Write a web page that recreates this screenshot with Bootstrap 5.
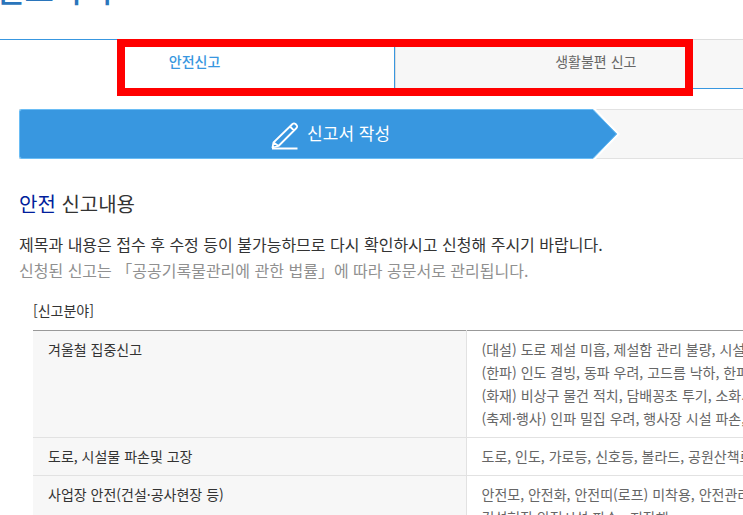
<!DOCTYPE html>
<html lang="ko">
<head>
<meta charset="utf-8">
<meta name="viewport" content="width=device-width, initial-scale=1">
<title>신고하기</title>
<link href="https://cdn.jsdelivr.net/npm/bootstrap@5.3.0/dist/css/bootstrap.min.css" rel="stylesheet">
<style>
body { font-family: "Noto Sans CJK KR", "Noto Sans KR", sans-serif; font-size: 14px; line-height: 23px; color: #333; height: 100vh; }
.page-title { font-size: 32px; line-height: 46px; font-weight: 500; color: #2a75bb; margin: -35px 0 28px -5px; }
.report-tabs { width: 108%; margin-left: -6px; }
.report-tabs a { height: 50px; padding-top: 10px; border: 1px solid #ddd; border-bottom-color: #3897e0; background: #f7f7f7; color: #666; }
.report-tabs a.active { border-color: #3897e0; border-bottom-color: #fff; background: #fff; color: #3897e0; font-weight: 500; }
.highlight { left: 117px; right: 50px; top: 0; height: 57px; border: 8px solid #f00; pointer-events: none; }
.steps { margin: 20px 0 0 19px; background: #f7f7f7; box-shadow: inset 0 1px #e2e2e2, inset 0 -1px #e2e2e2; }
.step-now { height: 50px; width: calc(80% - 5px); background: #3897e0; border: 1px solid #6abdf5; border-right: 0; border-radius: 3px 0 0 3px; color: #fff; font-size: 17px; padding: 0 0 3px 48px; }
.step-now svg { margin-top: 6px; }
.content-area { padding-left: 19px; }
.section-title { font-size: 20px; line-height: 30px; font-weight: 400; margin: 30px 0 12px; }
.section-title span { color: #001e9c; }
.notice { font-size: 16px; line-height: 26px; }
.notice-sub { color: #909090; }
.field-area { padding-left: 14px; margin-top: 16px; }
.field-table { width: 1000px; table-layout: fixed; border-top: 1px solid #999; }
.field-table th, .field-table td { padding: 7px 15px; border-bottom: 1px solid #e2e2e2; vertical-align: top; font-weight: 400; white-space: nowrap; }
.field-table th { width: 433px; background: #f7f7f7; border-right: 1px solid #e2e2e2; }
.field-table td { color: #666; }
</style>
<script src="https://cdn.jsdelivr.net/npm/bootstrap@5.3.0/dist/js/bootstrap.bundle.min.js"></script>
</head>
<body class="overflow-hidden">
<h1 class="page-title">신고하기</h1>
<div class="position-relative">
  <nav class="report-tabs d-flex" aria-label="신고 종류">
    <a class="active w-50 text-center text-decoration-none" href="#" aria-current="page">안전신고</a>
    <a class="w-50 text-center text-decoration-none" href="#">생활불편 신고</a>
  </nav>
  <div class="highlight position-absolute"></div>
</div>
<div class="steps d-flex">
  <div class="step-now d-flex align-items-center justify-content-center gap-2">
    <svg width="28" height="28" viewBox="0 0 28 28" fill="none" stroke="#fff" stroke-width="1.800" stroke-linejoin="round" aria-hidden="true"><path d="M1.500 25.500L2.500 20.500 21.500 2q1.500-1.300 3 0l1 1q1.300 1.500 0 3L7.500 24zM19 4.500l4.500 4.500M2.500 20.500l5 3.500"/><path d="M1 26.500h25.500" stroke-width="2"/></svg>
    <span>신고서 작성</span>
  </div>
  <svg width="27" height="50" viewBox="0 0 27 50" aria-hidden="true"><path d="M0 0h3l24 25L3 50H0z" fill="#fff"/><path d="M0 .5L24 25 0 49.5z" fill="#3897e0"/><path d="M0 .5L23.500 25 0 49.500" fill="none" stroke="#6abdf5"/></svg>
</div>
<main class="content-area">
  <h2 class="section-title"><span>안전</span> 신고내용</h2>
  <p class="notice mb-0 text-nowrap">제목과 내용은 접수 후 수정 등이 불가능하므로 다시 확인하시고 신청해 주시기 바랍니다.</p>
  <p class="notice notice-sub mb-0 text-nowrap">신청된 신고는 「공공기록물관리에 관한 법률」에 따라 공문서로 관리됩니다.</p>
  <div class="field-area">
    <div class="mb-2">[신고분야]</div>
    <table class="field-table">
      <tbody>
        <tr><th scope="row">겨울철 집중신고</th><td>(대설) 도로 제설 미흡, 제설함 관리 불량, 시설물 파손<br>(한파) 인도 결빙, 동파 우려, 고드름 낙하, 한파 쉼터<br>(화재) 비상구 물건 적치, 담배꽁초 투기, 소화시설<br>(축제·행사) 인파 밀집 우려, 행사장 시설 파손, 안전</td></tr>
        <tr><th scope="row">도로, 시설물 파손및 고장</th><td>도로, 인도, 가로등, 신호등, 볼라드, 공원산책로</td></tr>
        <tr><th scope="row">사업장 안전(건설·공사현장 등)</th><td>안전모, 안전화, 안전띠(로프) 미착용, 안전관리자<br>건설현장 안전시설 파손 · 지장해</td></tr>
      </tbody>
    </table>
  </div>
</main>
</body>
</html>
